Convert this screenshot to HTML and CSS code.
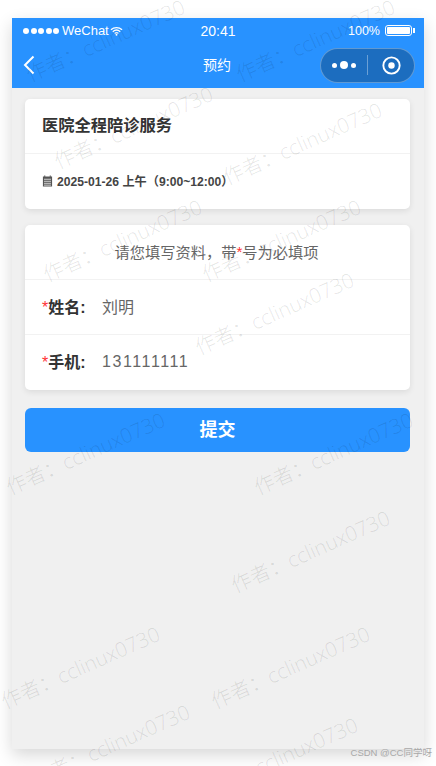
FILE: index.html
```html
<!DOCTYPE html>
<html lang="zh-CN">
<head>
<meta charset="utf-8">
<title>预约</title>
<link rel="stylesheet" href="styles.css">
</head>
<body>
<div class="phone">
  <header class="head">
    <div class="status">
      <div class="status-left">
        <span class="dots"><i></i><i></i><i></i><i></i><i></i></span>
        <span class="carrier">WeChat</span>
        <svg class="wifi" viewBox="0 0 14 10" width="13" height="10"><path d="M1 3.6C4.4.6 9.6.6 13 3.6M3 5.7c2.3-2 5.7-2 8 0M5 7.6c1.2-1 2.8-1 4 0" fill="none" stroke="#fff" stroke-width="1.4"/><circle cx="7" cy="9" r="1" fill="#fff"/></svg>
      </div>
      <div class="time">20:41</div>
      <div class="status-right">
        <span class="pct">100%</span>
        <span class="battery"><b></b></span><span class="nub"></span>
      </div>
    </div>
    <div class="nav">
      <svg class="back" viewBox="0 0 12 20" width="12" height="20"><path d="M10.5 1.5 2 10l8.5 8.5" fill="none" stroke="#fff" stroke-width="2"/></svg>
      <div class="nav-title">预约</div>
      <div class="capsule">
        <span class="more"><i></i><i class="big"></i><i></i></span>
        <span class="sep"></span>
        <svg viewBox="0 0 20 20" width="19" height="19"><circle cx="10" cy="10" r="8.6" fill="none" stroke="#fff" stroke-width="2"/><circle cx="10" cy="10" r="3.4" fill="#fff"/></svg>
      </div>
    </div>
  </header>
  <main class="content">
    <section class="card">
      <div class="row title-row">医院全程陪诊服务</div>
      <div class="row date-row">
        <svg viewBox="0 0 12 13" width="11" height="12"><path d="M1 1.5h10v11H1z" fill="#555"/><path d="M3 .4v2M9 .4v2" stroke="#555"/><path d="M2.2 4.6h7.6M2.2 6.8h7.6M2.2 9h7.6M2.2 11h7.6" stroke="#fff" stroke-width=".8"/></svg>
        <span>2025-01-26 上午（9:00~12:00）</span>
      </div>
    </section>
    <section class="card">
      <div class="row note-row">请您填写资料，带<em>*</em>号为必填项</div>
      <div class="row field"><label><em>*</em>姓名:</label><span class="value">刘明</span></div>
      <div class="row field"><label><em>*</em>手机:</label><span class="value num">131111111</span></div>
    </section>
    <button class="submit" type="button">提交</button>
  </main>
</div>
<div class="marks">
  <span class="mark m1">作者：cclinux0730</span>
  <span class="mark m2">作者：cclinux0730</span>
  <span class="mark m3">作者：cclinux0730</span>
  <span class="mark m4">作者：cclinux0730</span>
  <span class="mark m5">作者：cclinux0730</span>
  <span class="mark m6">作者：cclinux0730</span>
  <span class="mark m7">作者：cclinux0730</span>
  <span class="mark m8">作者：cclinux0730</span>
  <span class="mark m9">作者：cclinux0730</span>
  <span class="mark m10">作者：cclinux0730</span>
  <span class="mark m11">作者：cclinux0730</span>
  <span class="mark m12">作者：cclinux0730</span>
  <span class="mark m13">作者：cclinux0730</span>
  <span class="mark m14">作者：cclinux0730</span>
</div>
<div class="credit">CSDN @CC同学呀</div>
</body>
</html>
```
FILE: styles.css
```css
* { box-sizing: border-box; }
html, body { margin: 0; height: 100%; overflow: hidden; }
body {
  position: relative;
  background: #fff;
  padding: 18px 12px 0;
  font-family: "Liberation Sans", "Noto Sans CJK SC", sans-serif;
  color: #333;
}
.phone {
  width: 412px;
  height: 731px;
  background: #f0f0f0;
  box-shadow: 0 6px 16px rgba(0,0,0,.16);
  display: flex;
  flex-direction: column;
}
.head { background: #2892ff; color: #fff; height: 70px; flex: none; }
.status {
  height: 25px;
  padding: 0 9px 0 11px;
  display: grid;
  grid-template-columns: 1fr auto 1fr;
  align-items: center;
  font-size: 12px;
}
.status-left { display: flex; align-items: center; gap: 3px; }
.dots { display: flex; gap: 1.5px; }
.dots i { width: 6px; height: 6px; background: #fff; border-radius: 50%; }
.carrier { font-size: 13px; }
.wifi { margin-left: -2px; }
.time { font-size: 14px; padding-right: 2px; }
.status-right { display: flex; align-items: center; justify-content: flex-end; }
.pct { font-size: 12.5px; margin-right: 5px; }
.battery { width: 27px; height: 11px; border: 1px solid #fff; border-radius: 3px; padding: 1px; display: block; }
.battery b { display: block; height: 100%; background: #fff; border-radius: 1px; }
.nub { width: 2px; height: 5px; background: #fff; margin-left: 1px; }
.nav {
  height: 45px;
  padding: 0 9px 1px 11px;
  display: grid;
  grid-template-columns: 1fr auto 1fr;
  align-items: center;
}
.back { display: block; }
.nav-title { font-size: 14px; padding: 0 2px 2px 0; margin-left: -2px; }
.capsule {
  justify-self: end;
  width: 95px;
  height: 35px;
  border-radius: 18px;
  background: #1c6dbf;
  border: 1px solid rgba(255,255,255,.3);
  display: flex;
  align-items: center;
  padding-left: 11px;
}
.more { display: flex; align-items: center; gap: 3px; flex: none; }
.more i { width: 5px; height: 5px; background: #fff; border-radius: 50%; }
.more i.big { width: 8px; height: 8px; }
.sep { width: 1px; height: 20px; background: rgba(255,255,255,.35); margin: 0 14px 0 11px; }
.content { padding: 11px 14px 0 13px; display: flex; flex-direction: column; }
.card {
  background: #fff;
  border-radius: 5px;
  box-shadow: 0 2px 6px rgba(0,0,0,.09);
  margin-bottom: 16px;
  overflow: hidden;
}
.row { display: flex; align-items: center; padding: 0 17px; height: 55px; border-bottom: 1px solid #f2f2f2; }
.row:last-child { border-bottom: 0; }
.title-row { font-size: 16.25px; font-weight: 700; padding-bottom: 5px; }
.date-row { font-size: 12.15px; font-weight: 700; gap: 4px; color: #444; padding-bottom: 2px; }
.note-row { justify-content: center; font-size: 15.25px; color: #666; padding-left: 15px; padding-bottom: 2px; }
em { font-style: normal; font-weight: 400; color: #f33; }
.field { padding-bottom: 3px; }
.field label { font-size: 16px; font-weight: 700; width: 60px; flex: none; white-space: nowrap; }
.value { font-size: 16px; color: #666; }
.num { letter-spacing: 1.6px; padding-top: 2px; }
.submit {
  margin-top: 2px;
  height: 44px;
  padding: 0 0 4px;
  border: 0;
  border-radius: 6px;
  background: #2892ff;
  color: #fff;
  font-family: inherit;
  font-size: 18px;
  font-weight: 700;
}
.marks { position: absolute; inset: 0; pointer-events: none; overflow: hidden; }
.mark {
  position: absolute;
  width: 200px;
  margin: -15px 0 0 -100px;
  text-align: center;
  font-size: 20.5px;
  line-height: 30px;
  white-space: nowrap;
  color: rgba(0,0,0,.11);
  transform: rotate(-24deg);
  font-family: "Open Sans", "Noto Sans CJK SC", sans-serif;
  font-weight: 300;
}
.m1 { left: 105px; top: 40px; }
.m2 { left: 315px; top: 40px; }
.m3 { left: 133px; top: 127px; }
.m4 { left: 302px; top: 143px; }
.m5 { left: 122px; top: 240px; }
.m6 { left: 281px; top: 240px; }
.m7 { left: 274px; top: 313px; }
.m8 { left: 85px; top: 453px; }
.m9 { left: 333px; top: 453px; }
.m10 { left: 310px; top: 551px; }
.m11 { left: 80px; top: 667px; }
.m12 { left: 290px; top: 667px; }
.m13 { left: 110px; top: 745px; }
.m14 { left: 278px; top: 758px; }
.credit {
  position: absolute;
  right: 4px;
  bottom: 7px;
  font-size: 9.5px;
  color: #a8a8a8;
  font-family: "Liberation Sans", "Noto Sans CJK SC", sans-serif;
}
```
